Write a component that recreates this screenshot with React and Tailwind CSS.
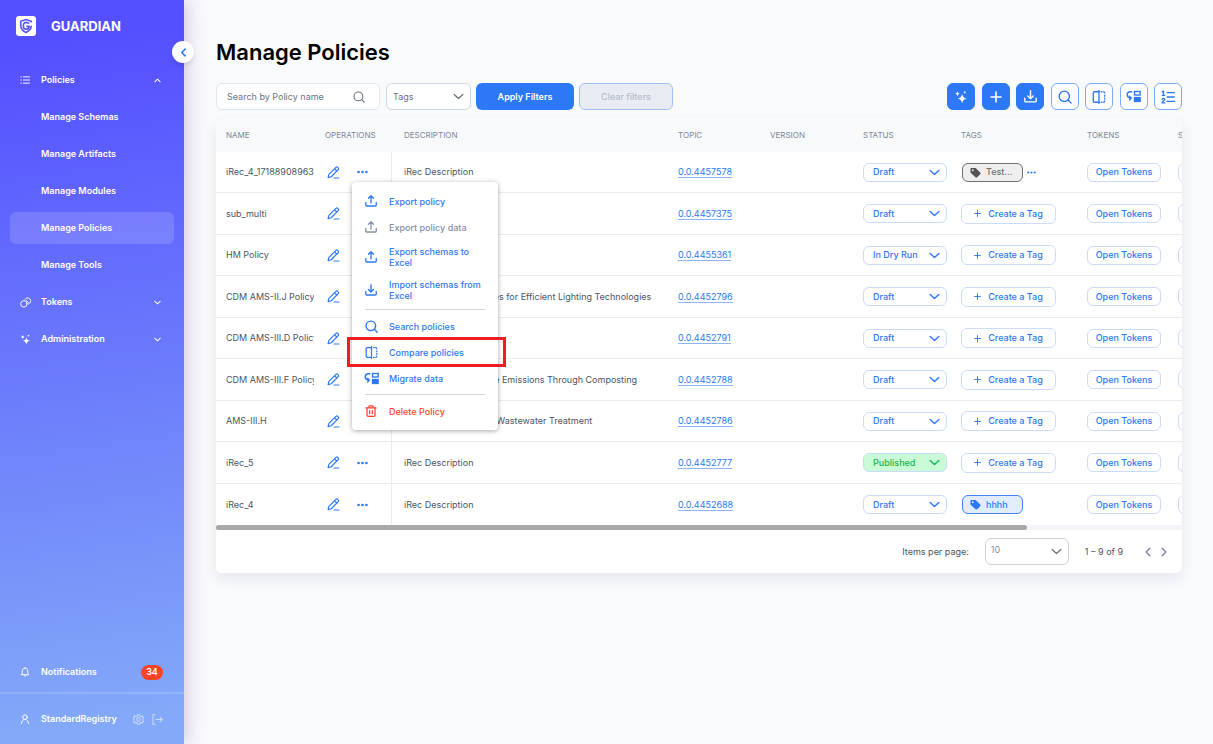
import React from "react";

const blue = "text-[#2c78f6]";

function Svg({ children, className = "", vb = "0 0 24 24", sw = 2 }) {
  return (
    <svg
      viewBox={vb}
      className={className}
      fill="none"
      stroke="currentColor"
      strokeWidth={sw}
      strokeLinecap="round"
      strokeLinejoin="round"
      aria-hidden="true"
    >
      {children}
    </svg>
  );
}

const Chevron = ({ dir = "down", className, sw = 2.8 }) => (
  <Svg className={className} sw={sw}>
    {dir === "down" && <path d="M2.5 7.5l9.500 9 9.500-9" />}
    {dir === "up" && <path d="M3 16.5l9-9 9 9" />}
    {dir === "left" && <path d="M16.5 3l-9 9 9 9" />}
    {dir === "right" && <path d="M7.5 3l9 9-9 9" />}
  </Svg>
);

const SearchIcon = ({ className, sw = 2.4 }) => (
  <Svg className={className} sw={sw}>
    <circle cx="10.800" cy="10.800" r="8.800" />
    <path d="M17.3 17.3L22.5 22.5" />
  </Svg>
);

const TrayIcon = ({ className, down }) => (
  <Svg className={className} sw={2.6}>
    <path d="M1.5 15v5.2c0 1 .8 1.8 1.8 1.8h17.4c1 0 1.8-.8 1.8-1.8V15" />
    {down ? <path d="M12 1.5v14M7 11l5 5 5-5" /> : <path d="M12 16V2M7 6.5l5-5 5 5" />}
  </Svg>
);

const CompareIcon = ({ className }) => (
  <Svg className={className} sw={2.300}>
    <path d="M12 .8v22.4" />
    <path d="M12 3H4.2C3 3 2.2 3.8 2.2 5v14c0 1.2.8 2 2 2H12" />
    <path d="M15.800 3h1M19.600 3.100c1.300.1 2.200.8 2.200 2.200M21.800 9.200v1.600M21.800 14v1.600M15.800 21h1M19.600 20.900c1.300-.1 2.200-.8 2.200-2.200" />
  </Svg>
);

const MigrateIcon = ({ className }) => (
  <svg viewBox="0 0 24 24" className={className} fill="none" stroke="currentColor" aria-hidden="true">
    <path d="M10 4.500H7C4 4.500 2 6.600 2 9.300s2 4.900 5 4.900" strokeWidth="2.300" />
    <path d="M5.500 10.500l4.200 3.800-4.200 5z" fill="currentColor" strokeWidth=".6" />
    <rect x="13.600" y="4" width="9" height="5.600" strokeWidth="2.200" />
    <rect x="12.500" y="12.600" width="11.200" height="8.400" fill="currentColor" stroke="none" />
  </svg>
);

const SparkleIcon = ({ className }) => (
  <svg viewBox="0 0 24 24" className={className} fill="currentColor" aria-hidden="true">
    <path d="M14 7c1.200 4.800 2.700 6.600 7.500 7.800-4.800 1.200-6.300 2.900-7.500 7.900-1.200-5-2.700-6.700-7.500-7.900C11.300 13.600 12.800 11.800 14 7z" />
    <path d="M6 2.200c.8 2.700 1.600 3.500 4.300 4.300-2.700.8-3.500 1.600-4.300 4.300-.8-2.700-1.600-3.500-4.300-4.300C4.400 5.700 5.200 4.900 6 2.200z" />
    <path d="M18.500 1.200c.5 1.800 1 2.300 2.800 2.800-1.800.5-2.300 1-2.800 2.800-.5-1.800-1-2.300-2.800-2.800 1.800-.5 2.300-1 2.800-2.800z" />
  </svg>
);

const NumberedIcon = ({ className }) => (
  <Svg className={className} sw={2.200}>
    <path d="M10.500 4.500h12.500M10.500 12h12.500M10.500 19.500h12.500" />
    <path d="M2.200 3.200L4.200 2v7M2 9.200h4.600" />
    <path d="M2 15.800c.4-1.200 1.300-1.600 2.300-1.600 1.300 0 2.200.8 2.200 1.900 0 1.900-4.500 3.200-4.500 5.900h4.700" />
  </Svg>
);

const PencilIcon = ({ className }) => (
  <Svg className={className} sw={2.200}>
    <path d="M2 21.500l1.500-6L16.500 2.600c.9-.9 2.300-.9 3.200 0l.9.9c.9.9.9 2.300 0 3.200L7.800 19.800 2 21.500z" />
    <path d="M14 5.200l4 4M13 22.200h9" />
  </Svg>
);

const TrashIcon = ({ className }) => (
  <Svg className={className} sw={2.500}>
    <path d="M2 5.800h20M7.800 5.500V3.200c0-1 .7-1.700 1.700-1.700h5c1 0 1.700.7 1.700 1.700v2.300" />
    <path d="M4 6v14.300c0 1.200.9 2.200 2.200 2.200h11.600c1.300 0 2.200-1 2.200-2.200V6M9.300 11v6.500M14.700 11v6.500" />
  </Svg>
);

const DotsIcon = ({ className }) => (
  <svg viewBox="0 0 24 8" className={className} fill="currentColor" aria-hidden="true">
    <circle cx="3.400" cy="4" r="2.900" />
    <circle cx="12" cy="4" r="2.900" />
    <circle cx="20.600" cy="4" r="2.900" />
  </svg>
);

const TagIcon = ({ className }) => (
  <svg viewBox="0 0 24 24" className={className} fill="currentColor" aria-hidden="true">
    <path
      fillRule="evenodd"
      d="M1 4.500C1 3 2 2 3.500 2h7.300c.8 0 1.500.3 2 .8l9.500 9.400c1 1 1 2.500 0 3.500l-6.700 6.700c-1 1-2.500 1-3.500 0L1.800 13c-.5-.5-.8-1.200-.8-2zM6 9a2 2 0 100-4 2 2 0 000 4z"
    />
  </svg>
);

const PlusIcon = ({ className, sw = 3.200 }) => (
  <Svg className={className} sw={sw}>
    <path d="M12 2v20M2 12h20" />
  </Svg>
);

const ListIcon = ({ className }) => (
  <Svg className={className} sw={2.200}>
    <path d="M8 4.500h15M8 12h15M8 19.500h15M2 4.500h1.500M2 12h1.500M2 19.500h1.500" />
  </Svg>
);

const CoinsIcon = ({ className }) => (
  <Svg className={className} sw={2}>
    <circle cx="8.500" cy="15" r="7" />
    <path d="M10.500 5a7 7 0 1 1 8.500 10.300" />
    <path d="M13.500 7.500c2.500 1 4 3 4.500 5.500" />
  </Svg>
);

const BellIcon = ({ className }) => (
  <Svg className={className} sw={2.200}>
    <path d="M12 2.500c-4 0-6.500 3-6.500 6.500v5L3 18.500h18L18.500 14V9c0-3.500-2.500-6.500-6.500-6.500z" />
    <path d="M9 19c.3 1.800 1.500 3 3 3s2.700-1.200 3-3" />
  </Svg>
);

const UserIcon = ({ className }) => (
  <Svg className={className} sw={2.300}>
    <circle cx="12" cy="7.500" r="5.500" />
    <path d="M3.500 22.500c.4-5 3.500-8 6.500-9.300M20.500 22.500c-.4-5-3.500-8-6.500-9.300" />
  </Svg>
);

const GearIcon = ({ className }) => (
  <Svg className={className} sw={2.200}>
    <path d="M9.800 1.800h4.400l.8 2.800 2.300 1 2.600-1.400 3 3-1.400 2.600.5 2.200-.5 2.200 1.400 2.600-3 3-2.600-1.400-2.300 1-.8 2.800H9.800L9 19.400l-2.300-1-2.600 1.400-3-3 1.400-2.600L2 12l.5-2.200-1.400-2.600 3-3 2.600 1.400 2.300-1z" />
    <circle cx="12" cy="12" r="3.800" />
  </Svg>
);

const LogoutIcon = ({ className }) => (
  <Svg className={className} sw={2.200}>
    <path d="M7 1.500H2v21h5M8.500 12h14M17.500 7l5 5-5 5" />
  </Svg>
);

const Logo = () => (
  <svg viewBox="0 0 40 40" className="size-5" fill="none" stroke="#5552fe" aria-hidden="true">
    <rect width="40" height="40" rx="6" fill="#fff" stroke="none" />
    <path d="M30.500 13V10.500L20 7 9.500 10.500V19c0 6.500 4 11 10.500 14 6.500-3 10.500-7.500 10.500-13.500" strokeWidth="3.200" />
    <path d="M26 15.500c-1.200-1.800-3-2.700-5.500-2.700-4 0-5.800 2.800-5.800 6.700s2.200 7 5.800 7c3.400 0 5.500-2.300 5.700-5.700H20.500" strokeWidth="3.200" />
  </svg>
);

const policyLinks = ["Manage Schemas", "Manage Artifacts", "Manage Modules", "Manage Policies", "Manage Tools"];

function NavGroup({ icon, label, open }) {
  return (
    <button type="button" aria-expanded={open} className="flex h-8 items-center px-[10px] text-left">
      <span className="w-[21px]">{icon}</span>
      <span className="flex-1">{label}</span>
      <Chevron dir={open ? "up" : "down"} className="mr-[3px] size-[7px]" sw={3.500} />
    </button>
  );
}

function Sidebar() {
  return (
    <aside className="relative z-10 flex w-[184px] shrink-0 flex-col bg-[linear-gradient(172deg,#544fff_6%,#83a9f8_96%)] text-[9px] font-semibold text-white shadow-[2px_0_18px_rgba(95,30,130,0.26)]">
      <div className="flex items-center gap-[15px] px-4 pt-4">
        <Logo />
        <span className="text-[13px] leading-5 font-bold">GUARDIAN</span>
      </div>
      <button
        type="button"
        aria-label="Collapse menu"
        className={`absolute top-[41px] -right-[10px] flex size-[22px] items-center justify-center rounded-full bg-white shadow-md ${blue}`}
      >
        <Chevron dir="left" className="size-[9px]" sw={4} />
      </button>
      <nav className="mt-7 flex flex-col gap-[5px] px-[10px]">
        <NavGroup open label="Policies" icon={<ListIcon className="size-[10px]" />} />
        {policyLinks.map((l) => (
          <a
            key={l}
            href="#"
            className={`flex h-8 items-center rounded-md pl-[31px] ${l === "Manage Policies" ? "bg-white/15" : ""}`}
          >
            {l}
          </a>
        ))}
        <NavGroup label="Tokens" icon={<CoinsIcon className="size-[11px]" />} />
        <NavGroup label="Administration" icon={<SparkleIcon className="size-[11px]" />} />
      </nav>
      <a href="#" className="mt-auto mb-1 flex h-8 items-center pr-[21px] pl-5">
        <BellIcon className="mr-[11px] size-[10px]" />
        <span className="flex-1">Notifications</span>
        <span className="flex h-[15px] w-[22px] items-center justify-center rounded-full bg-[#ff432a]">34</span>
      </a>
      <div className="flex h-[52px] items-center border-t-2 border-white/15 pr-[21px] pl-5">
        <UserIcon className="mr-[11px] size-[10px]" />
        <span className="flex-1">StandardRegistry</span>
        <button type="button" aria-label="Settings" className="mr-2 opacity-60">
          <GearIcon className="size-[11px]" />
        </button>
        <button type="button" aria-label="Log out" className="opacity-60">
          <LogoutIcon className="size-[11px]" />
        </button>
      </div>
    </aside>
  );
}

const toolbarButtons = [
  { label: "Suggest", icon: SparkleIcon, size: "size-[14px]", solid: true },
  { label: "Create policy", icon: PlusIcon, size: "size-[12px]", solid: true },
  { label: "Import policy", icon: TrayIcon, size: "size-[13px]", solid: true, down: true },
  { label: "Search policies", icon: SearchIcon, size: "size-[14px]" },
  { label: "Compare policies", icon: CompareIcon, size: "size-[14px]" },
  { label: "Migrate data", icon: MigrateIcon, size: "size-[15px]" },
  { label: "Policy list", icon: NumberedIcon, size: "size-[14px]" },
];

function Toolbar() {
  return (
    <div className="flex h-[27px] items-stretch">
      <div className="flex w-[164px] items-center rounded-md border border-[#e1e7ef] bg-white pr-[14px] pl-[10px]">
        <input
          aria-label="Search by Policy name"
          placeholder="Search by Policy name"
          className="w-full min-w-0 bg-transparent outline-none placeholder:text-[#6c7480]"
        />
        <SearchIcon className="size-[12px] shrink-0 text-[#6c7480]" sw={2.200} />
      </div>
      <div className="relative ml-[6px] w-[85px]">
        <select
          aria-label="Tags"
          className="h-full w-full appearance-none rounded-md border border-[#cfd8e2] bg-white pl-[6px] text-[#6c7480]"
        >
          <option>Tags</option>
        </select>
        <Chevron className="pointer-events-none absolute top-2 right-[7px] size-[11px] text-[#6c7480]" />
      </div>
      <button type="button" className="ml-[5px] w-[98px] rounded-md bg-[#2c78f6] font-semibold text-white">
        Apply Filters
      </button>
      <button
        type="button"
        disabled
        className="ml-[5px] w-[94px] rounded-md border border-[#9dc0f8] bg-[#e9edf3] font-medium text-[#b4bccb]"
      >
        Clear filters
      </button>
      <div className="ml-auto flex w-[235px] justify-between">
        {toolbarButtons.map(({ label, icon: Icon, size, solid, down }) => (
          <button
            key={label}
            type="button"
            aria-label={label}
            className={`flex w-7 items-center justify-center rounded-md border ${
              solid ? "border-[#2c78f6] bg-[#2c78f6] text-white" : `border-[#7dacf8] bg-white ${blue}`
            }`}
          >
            {down ? <Icon className={size} down /> : <Icon className={size} />}
          </button>
        ))}
      </div>
    </div>
  );
}

const rows = [
  { name: "iRec_4_1718890896312", desc: "iRec Description", topic: "0.0.4457578", status: "Draft", tag: "Test...", tagTone: "gray" },
  { name: "sub_multi", desc: "", topic: "0.0.4457375", status: "Draft" },
  { name: "HM Policy", desc: "", topic: "0.0.4455361", status: "In Dry Run" },
  { name: "CDM AMS-II.J Policy", desc: "Demand-Side Activities for Efficient Lighting Technologies", topic: "0.0.4452796", status: "Draft" },
  { name: "CDM AMS-III.D Policy", desc: "", topic: "0.0.4452791", status: "Draft" },
  { name: "CDM AMS-III.F Policy", desc: "Avoidance of Methane Emissions Through Composting", topic: "0.0.4452788", status: "Draft" },
  { name: "AMS-III.H", desc: "Methane Recovery in Wastewater Treatment", topic: "0.0.4452786", status: "Draft" },
  { name: "iRec_5", desc: "iRec Description", topic: "0.0.4452777", status: "Published" },
  { name: "iRec_4", desc: "iRec Description", topic: "0.0.4452688", status: "Draft", tag: "hhhh", tagTone: "blue" },
];

function TagCell({ row }) {
  if (!row.tag) {
    return (
      <button
        type="button"
        className={`flex h-5 w-[95px] items-center justify-center gap-[7px] rounded-md border border-[#cbdcfb] font-medium ${blue}`}
      >
        <PlusIcon className="size-[7px]" />
        Create a Tag
      </button>
    );
  }
  const gray = row.tagTone === "gray";
  return (
    <div className="flex items-center gap-1 pl-px">
      <button
        type="button"
        className={`flex h-[19px] w-[61px] items-center gap-[5px] rounded-md border pl-[7px] font-medium ${
          gray ? "border-[#707070] bg-[#efefef] text-[#707070]" : "border-[#3f83f5] bg-[#e1edfd] text-[#2c78f6]"
        }`}
      >
        <TagIcon className={`size-[11px] ${gray ? "text-[#555555]" : ""}`} />
        {row.tag}
      </button>
      {gray && (
        <button type="button" aria-label="More tags" className={blue}>
          <DotsIcon className="h-[3px] w-[9px]" />
        </button>
      )}
    </div>
  );
}

const columns = [
  { title: "Name", pad: "pl-[10px]" },
  { title: "Operations", pad: "pl-[11px]" },
  { title: "Description", pad: "pl-3" },
  { title: "Topic", pad: "pl-[10px]" },
  { title: "Version", pad: "pl-[10px]" },
  { title: "Status", pad: "pl-[10px]" },
  { title: "Tags", pad: "pl-[10px]" },
  { title: "Tokens", pad: "pl-[10px]" },
  { title: "Schemas", pad: "pl-[10px]" },
];

function PolicyTable() {
  return (
    <table className="w-[1150px] table-fixed border-separate border-spacing-0 text-left whitespace-nowrap">
      <colgroup>
        <col className="w-[98px]" />
        <col className="w-[78px]" />
        <col className="w-[276px]" />
        <col className="w-[92px]" />
        <col className="w-[93px]" />
        <col className="w-[98px]" />
        <col className="w-[126px]" />
        <col className="w-[91px]" />
        <col />
      </colgroup>
      <thead>
        <tr className="h-[34px] bg-[#f7f9fb] text-[8px] text-[#7d8797]">
          {columns.map((c) => (
            <th key={c.title} scope="col" className={`p-0 font-normal uppercase ${c.pad}`}>
              {c.title}
            </th>
          ))}
        </tr>
      </thead>
      <tbody className="bg-white text-[#4c5562] [&_td]:border-b [&_td]:border-[#e8ebf0] [&_tr:last-child_td]:border-b-0">
        {rows.map((r) => (
          <tr key={r.name} className="odd:h-[41px] even:h-[42px]">
            <td className="overflow-hidden py-0 pr-0 pl-[10px]">{r.name}</td>
            <td className="border-r border-r-[#e3e8ef] py-0 pr-0 pl-[13px]">
              <div className={`flex items-center gap-[17px] ${blue}`}>
                <button type="button" aria-label={`Edit ${r.name}`}>
                  <PencilIcon className="size-[13px]" />
                </button>
                <button type="button" aria-label={`Operations for ${r.name}`}>
                  <DotsIcon className="h-1 w-[11px]" />
                </button>
              </div>
            </td>
            <td className="py-0 pr-0 pl-3">{r.desc}</td>
            <td className="py-0 pr-0 pl-[10px]">
              <a href="#" className={`border-b border-[#8db5f8] ${blue}`}>
                {r.topic}
              </a>
            </td>
            <td></td>
            <td className="py-0 pr-0 pl-[10px]">
              <div className={`relative w-[84px] ${r.status === "Published" ? "text-[#15b653]" : blue}`}>
                <select
                  aria-label={`Status of ${r.name}`}
                  className={`block h-[19px] w-full appearance-none rounded-md border border-[#cbdcfb] pl-[9px] font-medium ${
                    r.status === "Published" ? "bg-[#c9fbd7]" : "bg-white"
                  }`}
                >
                  <option>{r.status}</option>
                </select>
                <Chevron className="pointer-events-none absolute top-1 right-[7px] size-[11px]" sw={3} />
              </div>
            </td>
            <td className="py-0 pr-0 pl-[10px]">
              <TagCell row={r} />
            </td>
            <td className="py-0 pr-0 pl-[10px]">
              <button type="button" className={`block h-[19px] w-[74px] rounded-md border border-[#cbdcfb] font-medium ${blue}`}>
                Open Tokens
              </button>
            </td>
            <td className="py-0 pr-0 pl-[10px]">
              <button type="button" aria-label="Open schemas" className="block h-[19px] w-20 rounded-md border border-[#cbdcfb]" />
            </td>
          </tr>
        ))}
      </tbody>
    </table>
  );
}

function MenuItem({ icon, children, tall, tone = blue, marked, disabled }) {
  return (
    <button
      type="button"
      role="menuitem"
      disabled={disabled}
      className={`relative flex w-full items-center pr-2 pl-[13px] text-left font-medium ${tall ? "h-[33px]" : "h-[26px]"} ${tone}`}
    >
      <span className="flex w-6 shrink-0">{icon}</span>
      <span className="leading-[11px]">{children}</span>
      {marked && <span className="absolute -inset-y-[2px] -right-2 -left-[5px] border-[3px] border-[#ee1c25]" />}
    </button>
  );
}

function OperationsMenu() {
  const s = "size-[12px]";
  return (
    <div
      role="menu"
      className="absolute top-16 left-[136px] w-[146px] rounded bg-white py-[6px] shadow-[0_1px_5px_rgba(0,0,0,0.35)]"
    >
      <MenuItem icon={<TrayIcon className={s} />}>Export policy</MenuItem>
      <MenuItem icon={<TrayIcon className={s} />} tone="text-[#848fa9]" disabled>
        Export policy data
      </MenuItem>
      <MenuItem icon={<TrayIcon className={s} />} tall>
        Export schemas to Excel
      </MenuItem>
      <MenuItem icon={<TrayIcon className={s} down />} tall>
        Import schemas from Excel
      </MenuItem>
      <hr className="mx-[13px] my-[3px] border-[#d2d4d8]" />
      <MenuItem icon={<SearchIcon className="size-[13px]" sw={2.600} />}>Search policies</MenuItem>
      <MenuItem icon={<CompareIcon className="size-[13px]" />} marked>
        Compare policies
      </MenuItem>
      <MenuItem icon={<MigrateIcon className="-ml-px size-[15px]" />}>Migrate data</MenuItem>
      <hr className="mx-[13px] my-[3px] border-[#d2d4d8]" />
      <MenuItem icon={<TrashIcon className={s} />} tone="text-[#ff432a]">
        Delete Policy
      </MenuItem>
    </div>
  );
}

function Pagination() {
  return (
    <div className="flex h-[43px] items-center justify-end rounded-b-md bg-white pr-[13px] text-[#4c5562]">
      <label htmlFor="page-size">Items per page:</label>
      <div className="relative ml-4 h-[27px] w-[84px]">
        <select
          id="page-size"
          className="h-full w-full appearance-none rounded-md border border-[#cfd4da] bg-white pb-1 pl-[5px] text-[#848fa9]"
        >
          <option>10</option>
        </select>
        <Chevron className="pointer-events-none absolute top-2 right-[7px] size-[11px] text-[#6c7480]" />
      </div>
      <span className="ml-4">1 – 9 of 9</span>
      <div className="ml-5 flex gap-[6px] text-[#7c87a5]">
        <button type="button" aria-label="Previous page">
          <Chevron dir="left" className="size-[10px]" sw={3.500} />
        </button>
        <button type="button" aria-label="Next page">
          <Chevron dir="right" className="size-[10px]" sw={3.500} />
        </button>
      </div>
    </div>
  );
}

export default function App() {
  return (
    <div className="flex min-h-screen bg-[#f9fafc] font-['Inter','Liberation_Sans',sans-serif] text-[9px] leading-[14px]">
      <Sidebar />
      <main className="min-w-0 flex-1 pt-9 pr-[31px] pl-8">
        <h1 className="mb-[15px] text-[22px] leading-8 font-semibold text-black">Manage Policies</h1>
        <Toolbar />
        <section className="relative mt-2 rounded-md shadow-[0_6px_14px_rgba(20,30,60,0.08)]">
          <div className="overflow-hidden">
            <PolicyTable />
          </div>
          <div className="h-[5px] bg-[#f4f5f8]">
            <div className="h-full w-[84%] rounded-full bg-[#a8a9ab]" />
          </div>
          <Pagination />
          <OperationsMenu />
        </section>
      </main>
    </div>
  );
}
